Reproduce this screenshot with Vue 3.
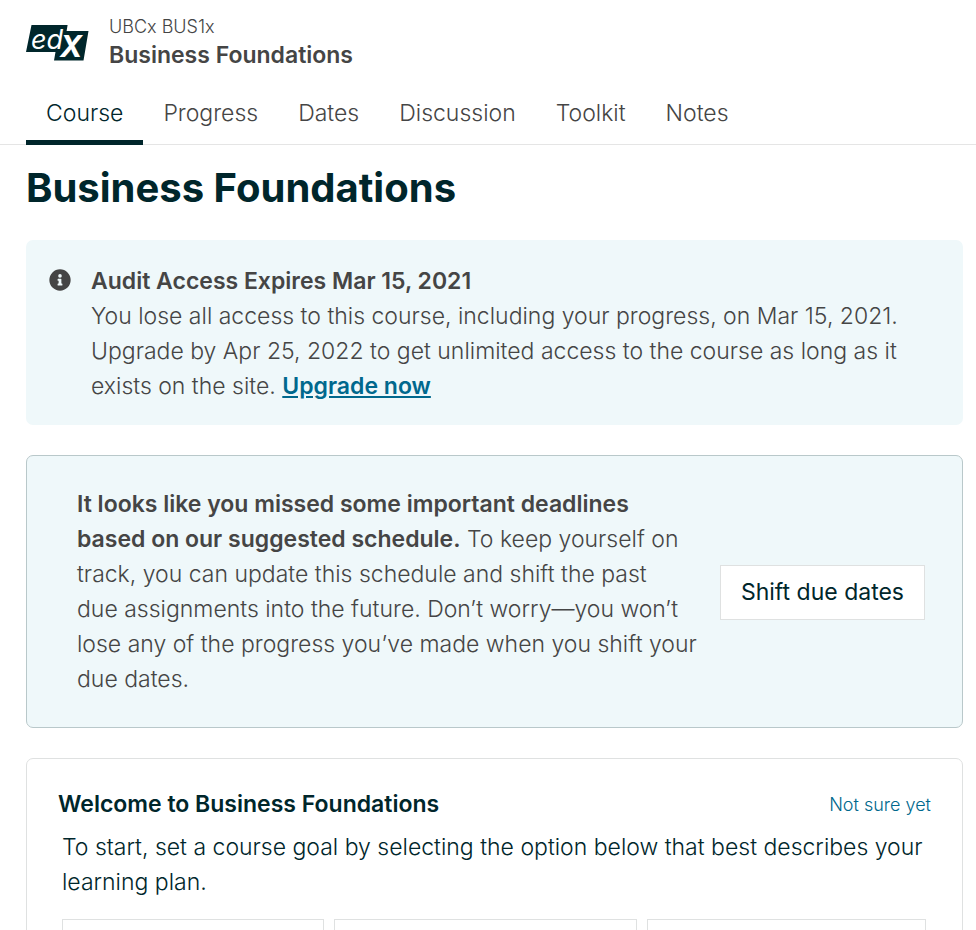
<script setup>
const tabs = ['Course', 'Progress', 'Dates', 'Discussion', 'Toolkit', 'Notes']
const activeTab = 'Course'
</script>

<template>
  <div class="page">
    <header class="header">
      <a class="logo" href="#" aria-label="edX">
        <svg width="63" height="36" viewBox="0 0 63 36" aria-hidden="true">
          <path fill="#00262b" d="M5.500 0H41.600L40.600 6H62.500L57.500 35.500H28L29.500 27H0Z" />
          <text class="logo-ed" x="5" y="24">ed</text>
          <text class="logo-x" x="34" y="32">X</text>
        </svg>
      </a>
      <div class="course-id">
        <span class="course-org">UBCx BUS1x</span>
        <span class="course-name">Business Foundations</span>
      </div>
    </header>

    <nav class="tabs">
      <a
        v-for="tab in tabs"
        :key="tab"
        href="#"
        class="tab"
        :class="{ active: tab === activeTab }"
      >{{ tab }}</a>
    </nav>

    <main class="content">
      <h1 class="title">Business Foundations</h1>

      <section class="alert">
        <svg class="info" viewBox="0 0 512 512" aria-hidden="true">
          <path
            fill="#454545"
            d="M256 8a248 248 0 1 0 0 496a248 248 0 1 0 0-496zm0 110a42 42 0 1 1 0 84a42 42 0 1 1 0-84zm56 254a12 12 0 0 1-12 12h-88a12 12 0 0 1-12-12v-24a12 12 0 0 1 12-12h12v-64h-12a12 12 0 0 1-12-12v-24a12 12 0 0 1 12-12h64a12 12 0 0 1 12 12v100h12a12 12 0 0 1 12 12z"
          />
        </svg>
        <p class="text">
          <strong>Audit Access Expires Mar 15, 2021</strong><br />
          You lose all access to this course, including your progress, on Mar 15, 2021.
          Upgrade by Apr 25, 2022 to get unlimited access to the course as long as it
          exists on the site. <a href="#" class="upgrade">Upgrade now</a>
        </p>
      </section>

      <section class="deadlines">
        <p class="text">
          <strong>It looks like you missed some important deadlines based&nbsp;on our suggested schedule.</strong>
          To keep yourself on track, you can update this schedule and shift the past
          due&nbsp;assignments into the future. Don’t worry—you won’t lose any of the progress
          you’ve made when you shift your due dates.
        </p>
        <button type="button" class="shift">Shift due dates</button>
      </section>

      <section class="welcome">
        <div class="welcome-head">
          <h2 class="welcome-title">Welcome to Business Foundations</h2>
          <button type="button" class="unsure">Not sure yet</button>
        </div>
        <p class="text welcome-text">
          To start, set a course goal by selecting the option below that best describes
          your learning plan.
        </p>
        <div class="goals">
          <button v-for="goal in 3" :key="goal" type="button" class="goal"></button>
        </div>
      </section>
    </main>
  </div>
</template>

<style>
html {
  overflow: hidden;
}
body {
  margin: 0;
  background: #fff;
}
</style>

<style scoped>
.page {
  height: 100vh;
  overflow: hidden;
  font-family: Inter, "Liberation Sans", sans-serif;
  font-size: 23px;
  font-weight: 300;
  line-height: 35px;
  color: #454545;
}
.header {
  display: flex;
  align-items: flex-start;
  gap: 20px;
  padding: 13px 26px 0;
}
.logo {
  padding-top: 12px;
}
.logo svg {
  display: block;
}
.logo-ed {
  fill: #fff;
  font-size: 27px;
  font-style: italic;
  font-weight: 400;
}
.logo-x {
  fill: #fff;
  font-size: 30px;
  font-style: italic;
  font-weight: 700;
}
.course-id {
  display: flex;
  flex-direction: column;
  line-height: 28px;
}
.course-org {
  font-size: 18px;
}
.course-name {
  font-weight: 600;
}
.tabs {
  display: flex;
  padding: 12px 26px 0;
  border-bottom: 1px solid #e5e5e5;
}
.tab {
  padding: 15px 20px 9px;
  margin-bottom: -1px;
  border-bottom: 5px solid transparent;
  color: #454545;
  text-decoration: none;
}
.tab.active {
  color: #00262b;
  border-bottom-color: #00262b;
}
.content {
  padding: 16px 13px 0 26px;
}
.title {
  margin: 0 0 25px;
  font-size: 40px;
  font-weight: 700;
  line-height: 54px;
  color: #00262b;
}
.text {
  margin: 0;
}
strong {
  font-weight: 600;
}
.alert {
  display: flex;
  gap: 20px;
  padding: 24px 48px 21px 23px;
  margin-bottom: 30px;
  border-radius: 7px;
  background: #eff8fa;
}
.info {
  flex: none;
  width: 22px;
  height: 22px;
  margin-top: 5px;
}
.upgrade {
  font-weight: 600;
  color: #00688d;
}
.deadlines {
  display: flex;
  align-items: center;
  justify-content: space-between;
  gap: 22px;
  padding: 31px 37px 30px 50px;
  margin-bottom: 30px;
  border: 1px solid #b9c8ca;
  border-radius: 7px;
  background: #eff8fa;
}
.shift {
  flex: none;
  padding: 9px 20px;
  border: 1px solid #dfe1e1;
  background: #fff;
  color: #00262b;
  font: inherit;
  font-weight: 400;
}
.welcome {
  padding: 28px 31px 31px;
  border: 1px solid #dfe1e1;
  border-radius: 7px;
  color: #00262b;
}
.welcome-head {
  display: flex;
  align-items: center;
  justify-content: space-between;
}
.welcome-title {
  margin: 0;
  font-size: 23px;
  font-weight: 600;
}
.unsure {
  padding: 0;
  border: 0;
  background: none;
  color: #00688d;
  font: inherit;
  font-size: 18px;
}
.welcome-text {
  padding: 8px 4px 0 4px;
}
.goals {
  display: grid;
  grid-template-columns: 262fr 303fr 279fr;
  gap: 10px;
  padding: 19px 5px 0 4px;
}
.goal {
  min-height: 120px;
  border: 1px solid #dfe1e1;
  background: #fff;
}
</style>
